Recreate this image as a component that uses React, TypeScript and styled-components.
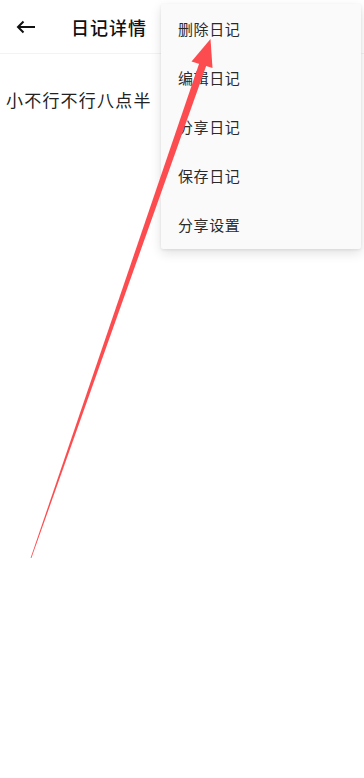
import React from 'react';
import styled, { createGlobalStyle } from 'styled-components';

const GlobalStyle = createGlobalStyle`
  html, body {
    margin: 0;
    padding: 0;
    background: #ffffff;
    font-family: "Noto Sans CJK SC", "Noto Sans", sans-serif;
  }
`;

const Page = styled.div`
  position: relative;
  width: 364px;
  height: 778px;
  overflow: hidden;
  background: #ffffff;
  display: flex;
  flex-direction: column;
`;

const Header = styled.header`
  height: 54px;
  display: flex;
  align-items: center;
  padding-left: 16px;
  border-bottom: 1px solid #f3f3f3;
  box-sizing: border-box;
`;

const BackButton = styled.div`
  width: 20px;
  height: 20px;
  display: flex;
  align-items: center;
  justify-content: center;
`;

const Title = styled.h1`
  margin: 0 0 0 35px;
  font-size: 18px;
  font-weight: 500;
  color: #111111;
  letter-spacing: 1px;
`;

const Content = styled.div`
  padding: 33px 6px 0;
  font-size: 17px;
  color: #222222;
  letter-spacing: 1.2px;
`;

const Menu = styled.ul`
  position: absolute;
  top: 4px;
  right: 3px;
  width: 200px;
  margin: 0;
  padding: 0;
  list-style: none;
  background: #fafafa;
  border-radius: 2px;
  box-shadow: 0 4px 12px rgba(0, 0, 0, 0.12), 0 1px 3px rgba(0, 0, 0, 0.08);
`;

const MenuItem = styled.li`
  height: 49px;
  display: flex;
  align-items: center;
  padding-left: 17px;
  font-size: 15px;
  color: #2a2a2a;
  letter-spacing: 0.6px;
`;

const Annotation = styled.svg`
  position: absolute;
  left: 0;
  top: 0;
  pointer-events: none;
`;

const items = ['删除日记', '编辑日记', '分享日记', '保存日记', '分享设置'];

export default function App() {
  return (
    <Page>
      <GlobalStyle />
      <Header>
        <BackButton>
          <svg width="20" height="14" viewBox="0 0 20 14" fill="none">
            <path d="M19 7H2M7.5 1.5L2 7l5.5 5.5" stroke="#111" strokeWidth="2" />
          </svg>
        </BackButton>
        <Title>日记详情</Title>
      </Header>
      <Content>小不行不行八点半</Content>
      <Menu>
        {items.map((t) => (
          <MenuItem key={t}>{t}</MenuItem>
        ))}
      </Menu>
      <Annotation width="364" height="778" viewBox="0 0 364 778">
        <polygon points="30.6,558 31.4,558 206.5,65 199.5,62.5" fill="#fd4c4f" />
        <polygon points="210.5,39 191.5,61.5 212.5,68" fill="#fd4c4f" />
      </Annotation>
    </Page>
  );
}
